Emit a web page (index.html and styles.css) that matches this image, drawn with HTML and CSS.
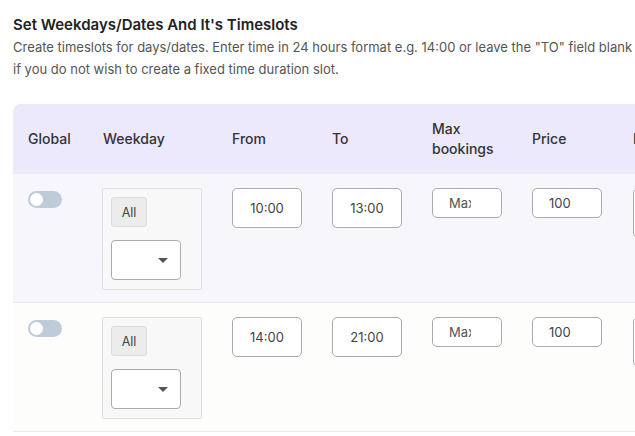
FILE: index.html
```html
<!DOCTYPE html>
<html lang="en">
<head>
    <meta charset="UTF-8">
    <meta name="viewport" content="width=device-width, initial-scale=1.0">
    <title>Timeslots</title>
    <link rel="stylesheet" href="styles.css">
</head>
<body>
    <h2 class="title">Set Weekdays/Dates And It's Timeslots</h2>
    <p class="desc">Create timeslots for days/dates. Enter time in 24 hours format e.g. 14:00 or leave the "TO" field blank if you do not wish to create a fixed time duration slot.</p>

    <div class="table-wrap">
        <table class="slots">
            <thead>
                <tr>
                    <th class="col-global">Global</th>
                    <th class="col-weekday">Weekday</th>
                    <th class="col-time">From</th>
                    <th class="col-time">To</th>
                    <th class="col-time">Max<br>bookings</th>
                    <th class="col-price">Price</th>
                    <th class="col-time">Lunch</th>
                </tr>
            </thead>
            <tbody>
                <!-- Row 1 -->
                <tr class="row-a">
                    <td><span class="toggle"><span class="knob"></span></span></td>
                    <td>
                        <div class="weekday-box">
                            <span class="chip">All</span>
                            <div class="select"><span class="caret"></span></div>
                        </div>
                    </td>
                    <td><input class="field" value="10:00"></td>
                    <td><input class="field" value="13:00"></td>
                    <td><input class="field short max" placeholder="Max"></td>
                    <td><input class="field short price" value="100"></td>
                    <td><input class="field tall"></td>
                </tr>
                <!-- Row 2 -->
                <tr class="row-b">
                    <td><span class="toggle"><span class="knob"></span></span></td>
                    <td>
                        <div class="weekday-box">
                            <span class="chip">All</span>
                            <div class="select"><span class="caret"></span></div>
                        </div>
                    </td>
                    <td><input class="field" value="14:00"></td>
                    <td><input class="field" value="21:00"></td>
                    <td><input class="field short max" placeholder="Max"></td>
                    <td><input class="field short price" value="100"></td>
                    <td><input class="field tall"></td>
                </tr>
            </tbody>
        </table>
    </div>
</body>
</html>
```

FILE: styles.css
```css
body {
    font-family: Inter, "Noto Sans", sans-serif;
    margin: 0;
    padding: 0 0 0 13px;
    background-color: #fff;
    color: #333;
    overflow: hidden;
}
.title {
    margin: 15px 0 0;
    font-size: 15px;
    font-weight: 600;
    line-height: 19px;
    color: #222;
}
.desc {
    margin: 2px 0 0;
    width: 622px;
    font-size: 13px;
    line-height: 22px;
    color: #555;
}
.table-wrap {
    margin-top: 24px;
    width: 705px;
}
.slots {
    width: 705px;
    border-collapse: separate;
    border-spacing: 0;
    table-layout: fixed;
}
.slots th {
    background-color: #ede9fd;
    height: 70px;
    padding: 0 0 0 15px;
    text-align: left;
    vertical-align: middle;
    font-size: 14px;
    font-weight: 500;
    line-height: 20px;
    color: #333;
}
.slots th:first-child {
    border-top-left-radius: 8px;
}
.col-global { width: 60px; }
.col-weekday { width: 114px; }
.col-time { width: 85px; }
.col-price { width: 86px; }
.slots td {
    height: 114px;
    padding: 14px 0 0 15px;
    vertical-align: top;
    border-bottom: 1px solid #ececf0;
}
.row-a td { background-color: #f7f7fb; }
.row-b td { background-color: #fdfdfb; }
.toggle {
    display: block;
    margin-top: 3px;
    width: 34px;
    height: 17px;
    border-radius: 9px;
    background-color: #c0cbd9;
    position: relative;
}
.knob {
    position: absolute;
    left: 2px;
    top: 2px;
    width: 13px;
    height: 13px;
    border-radius: 50%;
    background-color: #fff;
}
.weekday-box {
    width: 82px;
    height: 84px;
    margin-left: -1px;
    padding: 8px;
    background-color: #f8f8f8;
    border: 1px solid #e0e0e0;
    border-radius: 2px;
    display: flex;
    flex-direction: column;
    align-items: flex-start;
    gap: 13px;
}
.chip {
    box-sizing: border-box;
    width: 36px;
    height: 30px;
    display: flex;
    align-items: center;
    justify-content: center;
    background-color: #ececec;
    border: 1px solid #dcdcdc;
    border-radius: 3px;
    font-size: 12.5px;
    color: #444;
}
.select {
    box-sizing: border-box;
    width: 70px;
    height: 40px;
    background-color: #fff;
    border: 1px solid #a8abb0;
    border-radius: 4px;
    position: relative;
}
.caret {
    position: absolute;
    left: 46px;
    top: 17px;
    border-left: 5px solid transparent;
    border-right: 5px solid transparent;
    border-top: 5px solid #555;
}
.field {
    box-sizing: border-box;
    width: 70px;
    height: 40px;
    padding: 0;
    border: 1px solid #a8abb0;
    border-radius: 5px;
    background-color: #fff;
    font-family: Inter, sans-serif;
    font-size: 13px;
    color: #444;
    text-align: center;
    outline: none;
}
.field.short {
    height: 30px;
    text-align: left;
    padding-left: 16px;
}
.field.max {
    padding-right: 30px;
}
.field.max::placeholder {
    color: #555;
    opacity: 1;
}
.field.tall {
    height: 50px;
}
```
